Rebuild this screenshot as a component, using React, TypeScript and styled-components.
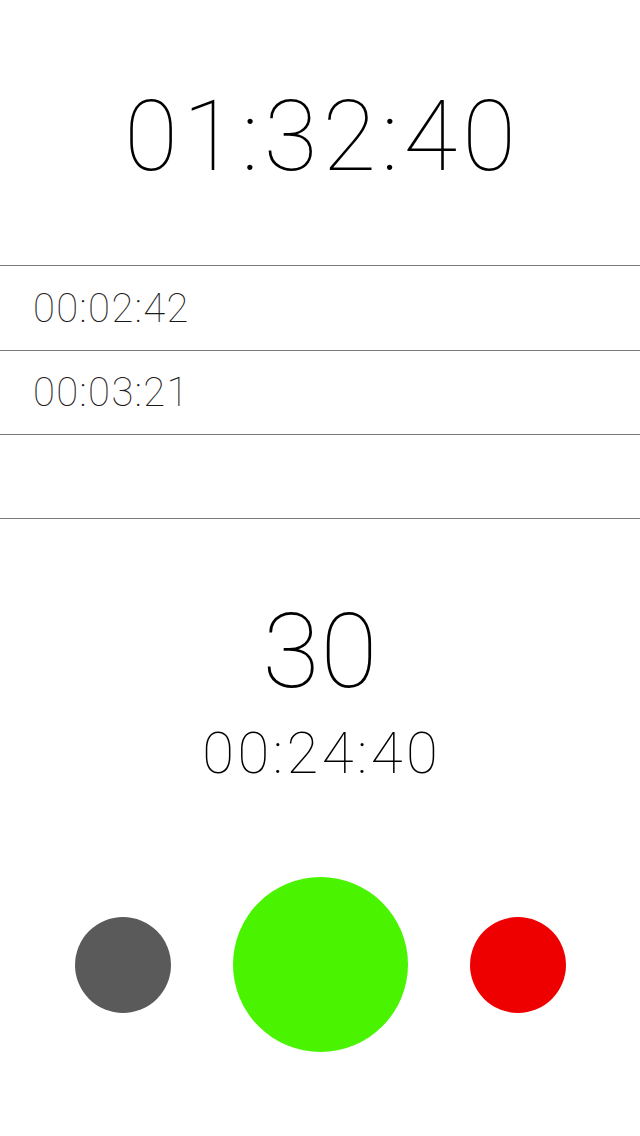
import React from "react";
import styled, { createGlobalStyle } from "styled-components";

const Global = createGlobalStyle`
  html, body { margin: 0; padding: 0; background: #fff; }
  body { font-family: Roboto, "Liberation Sans", sans-serif; }
`;

const Page = styled.div`
  width: 640px;
  height: 1136px;
  display: flex;
  flex-direction: column;
  background: #fff;
  color: #000;
  font-family: Roboto, "Liberation Sans", sans-serif;
  font-weight: 100;
`;

const Header = styled.div`
  height: 265px;
  display: flex;
  align-items: center;
  justify-content: center;
  padding-top: 8px;
  box-sizing: border-box;
`;

const MainTime = styled.div`
  font-size: 98px;
  line-height: 1;
  letter-spacing: 5px;
  margin-right: -5px;
`;

const LapList = styled.div`
  border-top: 1px solid #7a7a7a;
  display: flex;
  flex-direction: column;
`;

const LapRow = styled.div`
  height: 83px;
  border-bottom: 1px solid #7a7a7a;
  display: flex;
  align-items: center;
  padding-left: 33px;
  font-size: 40px;
  letter-spacing: 1.4px;
  color: #1a1a1a;
  &:first-child {
    height: 84px;
  }
`;

const Counter = styled.div`
  display: flex;
  flex-direction: column;
  align-items: center;
  padding-top: 81px;
`;

const Count = styled.div`
  font-size: 104px;
  line-height: 1;
  letter-spacing: 1px;
  margin-right: -1px;
`;

const SubTime = styled.div`
  font-size: 58px;
  line-height: 1;
  margin-top: 20px;
  letter-spacing: 3.5px;
  margin-right: -3.5px;
`;

const Controls = styled.div`
  display: flex;
  align-items: center;
  justify-content: center;
  gap: 62px;
  margin-top: 95px;
`;

const Circle = styled.button<{ $size: number; $color: string }>`
  width: ${(p) => p.$size}px;
  height: ${(p) => p.$size}px;
  border-radius: 50%;
  background: ${(p) => p.$color};
  border: none;
  padding: 0;
  flex: none;
`;

export default function App() {
  const laps = ["00:02:42", "00:03:21", ""];
  return (
    <>
      <Global />
      <Page>
        <Header>
          <MainTime>01:32:40</MainTime>
        </Header>
        <LapList>
          {laps.map((l, i) => (
            <LapRow key={i}>{l}</LapRow>
          ))}
        </LapList>
        <Counter>
          <Count>30</Count>
          <SubTime>00:24:40</SubTime>
        </Counter>
        <Controls>
          <Circle $size={96} $color="#5a5a5a" aria-label="reset" />
          <Circle $size={175} $color="#4af400" aria-label="start" />
          <Circle $size={96} $color="#ee0000" aria-label="stop" />
        </Controls>
      </Page>
    </>
  );
}
